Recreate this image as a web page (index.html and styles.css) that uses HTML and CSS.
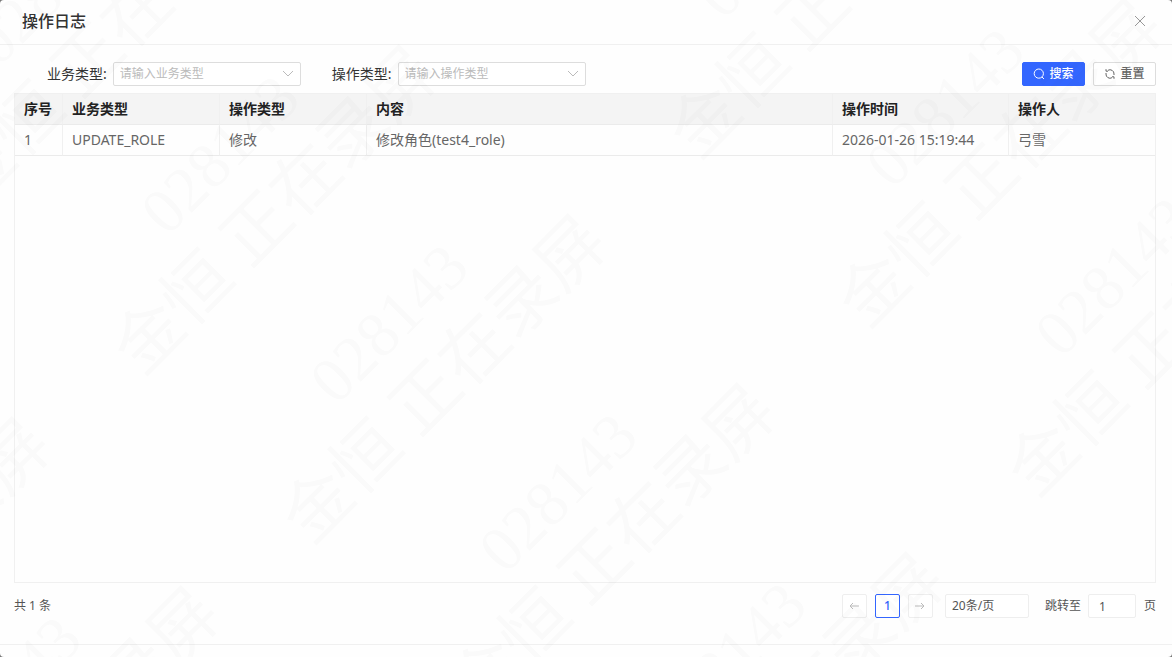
FILE: index.html
```html
<!DOCTYPE html>
<html lang="zh-CN">
<head>
<meta charset="utf-8">
<meta name="viewport" content="width=device-width, initial-scale=1">
<title>操作日志</title>
<link rel="stylesheet" href="styles.css">
</head>
<body>
<div class="dialog">
  <header class="dialog-header">
    <h1 class="dialog-title">操作日志</h1>
    <button class="close" type="button" aria-label="关闭">
      <svg width="12" height="12" viewBox="0 0 12 12" fill="none" stroke="currentColor"><path d="M1 1l10 10M11 1L1 11"/></svg>
    </button>
  </header>
  <main class="dialog-body">
    <form class="filters">
      <div class="field">
        <label for="biz">业务类型:</label>
        <div class="select-box">
          <select id="biz"><option>请输入业务类型</option></select>
          <svg class="chevron" width="12" height="8" viewBox="0 0 12 8" fill="none" stroke="currentColor"><path d="M1 1l5 5 5-5"/></svg>
        </div>
      </div>
      <div class="field">
        <label for="op">操作类型:</label>
        <div class="select-box">
          <select id="op"><option>请输入操作类型</option></select>
          <svg class="chevron" width="12" height="8" viewBox="0 0 12 8" fill="none" stroke="currentColor"><path d="M1 1l5 5 5-5"/></svg>
        </div>
      </div>
      <div class="actions">
        <button class="btn btn-primary" type="button">
          <svg width="12" height="12" viewBox="0 0 12 12" fill="none" stroke="currentColor"><circle cx="5.8" cy="5.6" r="4.6"/><path d="M9 9l2 2"/></svg>
          搜索
        </button>
        <button class="btn" type="button">
          <svg width="12" height="12" viewBox="0 0 12 12" fill="none" stroke="currentColor"><path d="M4 2.300A4 4 0 0 1 10 6v1M8 9.700A4 4 0 0 1 2 6V5M2 1.200v2h2M10 10.800v-2H8"/></svg>
          重置
        </button>
      </div>
    </form>
    <div class="table-box">
      <table class="log-table">
        <colgroup><col class="col-index"><col class="col-biz"><col class="col-op"><col><col class="col-time"><col class="col-user"></colgroup>
        <thead>
          <tr><th>序号</th><th>业务类型</th><th>操作类型</th><th>内容</th><th>操作时间</th><th>操作人</th></tr>
        </thead>
        <tbody>
          <tr><td>1</td><td>UPDATE_ROLE</td><td>修改</td><td>修改角色(test4_role)</td><td>2026-01-26 15:19:44</td><td>弓雪</td></tr>
        </tbody>
      </table>
    </div>
    <nav class="pagination" aria-label="分页">
      <span class="total">共 1 条</span>
      <button class="page" type="button" disabled aria-label="上一页">
        <svg width="10" height="8" viewBox="0 0 10 8" fill="none" stroke="currentColor"><path d="M10 4H1M4 1L1 4l3 3"/></svg>
      </button>
      <button class="page page-current" type="button" aria-current="page">1</button>
      <button class="page" type="button" disabled aria-label="下一页">
        <svg width="10" height="8" viewBox="0 0 10 8" fill="none" stroke="currentColor"><path d="M0 4h9M6 1l3 3-3 3"/></svg>
      </button>
      <select class="page-size" aria-label="每页条数"><option>20条/页</option></select>
      <label for="jump">跳转至</label>
      <input class="jump" id="jump" type="text" value="1">
      <span>页</span>
    </nav>
  </main>
  <footer class="dialog-footer"></footer>
</div>
<svg class="watermark" aria-hidden="true">
  <defs>
    <g id="mark"><text x="84" y="-64">028143</text><text class="mark-name" x="-33" y="17">金恒 正在录屏</text></g>
  </defs>
  <use href="#mark" transform="translate(-16 173) rotate(-45)"/>
  <use href="#mark" transform="translate(153 342) rotate(-45)"/>
  <use href="#mark" transform="translate(322 511) rotate(-45)"/>
  <use href="#mark" transform="translate(491 680) rotate(-45)"/>
  <use href="#mark" transform="translate(660 849) rotate(-45)"/>
  <use href="#mark" transform="translate(709 126) rotate(-45)"/>
  <use href="#mark" transform="translate(878 295) rotate(-45)"/>
  <use href="#mark" transform="translate(1047 464) rotate(-45)"/>
  <use href="#mark" transform="translate(-234 714) rotate(-45)"/>
  <use href="#mark" transform="translate(-65 883) rotate(-45)"/>
</svg>
</body>
</html>
```
FILE: styles.css
```css
* { box-sizing: border-box; }

body {
  margin: 0;
  background: #777;
  color: #333;
  font: 14px/20px "Noto Sans", "Noto Sans CJK SC", sans-serif;
}

button, select, input { margin: 0; font: inherit; color: inherit; }

.dialog {
  display: flex;
  flex-direction: column;
  min-height: 100vh;
  background: #fefefe;
  border-radius: 4px;
}

.dialog-header {
  display: flex;
  align-items: center;
  justify-content: space-between;
  padding: 9px 24px 11px 22px;
  border-bottom: 1px solid #f0f0f0;
}

.dialog-title { margin: 0; font-size: 16px; font-weight: 500; line-height: 24px; }

.close {
  display: flex;
  padding: 2px;
  border: 0;
  background: none;
  color: #999;
}

.dialog-body {
  display: flex;
  flex: 1;
  flex-direction: column;
  padding: 17px 16px 26px 14px;
}

.filters { display: flex; align-items: center; padding-left: 33px; margin-bottom: 7px; }
.field { display: flex; align-items: center; gap: 6px; margin-right: 31px; }
.select-box { position: relative; width: 188px; }

.select-box select {
  display: block;
  width: 100%;
  height: 24px;
  padding: 0 24px 0 6px;
  appearance: none;
  border: 1px solid #ddd;
  border-radius: 2px;
  background: #fff;
  color: #bbb;
  font-size: 12px;
}

.chevron { position: absolute; top: 8px; right: 7px; color: #bbb; pointer-events: none; }

.actions { display: flex; gap: 8px; margin-left: auto; }

.btn {
  display: flex;
  align-items: center;
  justify-content: center;
  gap: 4px;
  width: 63px;
  height: 24px;
  padding: 0;
  border: 1px solid #ddd;
  border-radius: 2px;
  background: #fff;
  color: #666;
  font-size: 12px;
  font-weight: 500;
}

.btn-primary { border-color: #3366ff; background: #3366ff; color: #fff; }

.table-box { flex: 1; border: 1px solid #f0f0f0; }

.log-table { width: 100%; border-collapse: separate; border-spacing: 0; table-layout: fixed; }
.col-index { width: 48px; }
.col-biz { width: 157px; }
.col-op { width: 147px; }
.col-time { width: 176px; }
.col-user { width: 146px; }

.log-table th,
.log-table td {
  height: 31px;
  padding: 0 9px;
  border-right: 1px solid #f0f0f0;
  border-bottom: 1px solid #ebebeb;
  text-align: left;
}

.log-table th:last-child,
.log-table td:last-child { border-right: 0; }
.log-table th { background: #f4f4f4; color: #222; font-weight: 700; }
.log-table td { color: #666; }

.pagination {
  display: flex;
  align-items: center;
  margin-top: 11px;
  color: #555;
  font-size: 12px;
}

.total { margin-right: auto; }

.page {
  display: flex;
  align-items: center;
  justify-content: center;
  width: 25px;
  height: 24px;
  margin-right: 8px;
  padding: 0;
  border: 1px solid #eee;
  border-radius: 2px;
  background: #fff;
  color: #bbb;
}

.page.page-current { border-color: #3366ff; color: #3366ff; font-weight: 500; }

.page-size,
.jump {
  height: 24px;
  border: 1px solid #eee;
  border-radius: 2px;
  background: #fff;
}

.page-size { width: 84px; margin: 0 16px 0 4px; padding: 0 6px; appearance: none; }
.jump { width: 48px; margin: 0 8px 0 7px; padding: 0 10px; }

.dialog-footer { height: 13px; border-top: 1px solid #f0f0f0; }

.watermark {
  position: fixed;
  inset: 0;
  width: 100%;
  height: 100%;
  pointer-events: none;
  fill: rgba(70, 70, 40, 0.02);
  font: 64px "Liberation Serif", "Noto Sans CJK SC", serif;
}

.mark-name { font-size: 68px; }
```
